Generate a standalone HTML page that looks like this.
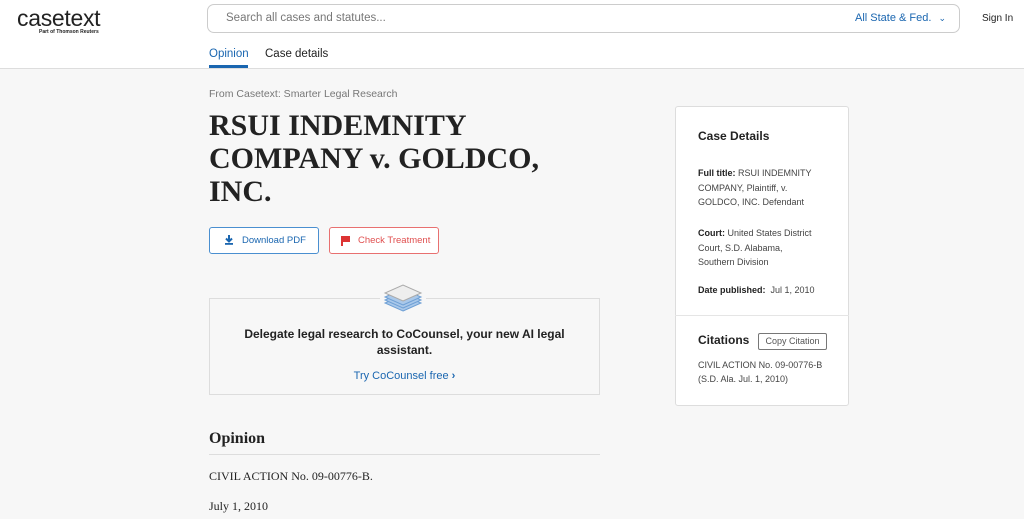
<!DOCTYPE html>
<html><head><style>
*{margin:0;padding:0;box-sizing:border-box}
body{width:1024px;height:519px;overflow:hidden;background:#f7f7f7;font-family:"Liberation Sans",sans-serif;color:#222;position:relative}
.hdr{position:absolute;left:0;top:0;width:1024px;height:69px;background:#fff;border-bottom:1px solid #ddd}
.abs{position:absolute}
.serif{font-family:"Liberation Serif",serif}
</style></head><body>
<div class="hdr">
 <div class="abs" style="left:17px;top:5px;font-size:23px;color:#222;letter-spacing:-0.3px">casetext</div>
 <div class="abs" style="left:39px;top:29px;font-size:5px;font-weight:bold">Part of Thomson Reuters</div>
 <div class="abs" style="left:207px;top:4px;width:753px;height:29px;border:1px solid #ccc;border-radius:7px"></div>
 <div class="abs" style="left:226px;top:12px;font-size:11.5px;color:#777">Search all cases and statutes...</div>
 <div class="abs" style="left:855px;top:12px;font-size:11px;color:#1a66b0">All State &amp; Fed. <span style="margin-left:4px;font-size:9px">&#8964;</span></div>
 <div class="abs" style="left:982px;top:13px;font-size:10px;color:#222">Sign In</div>
 <div class="abs" style="left:209px;top:48px;font-size:11.5px;color:#1a66b0">Opinion</div>
 <div class="abs" style="left:209px;top:65px;width:39px;height:3px;background:#1a66b0"></div>
 <div class="abs" style="left:265px;top:48px;font-size:11.5px;color:#222">Case details</div>
</div>
<div class="abs" style="left:209px;top:88px;font-size:10.5px;color:#777">From Casetext: Smarter Legal Research</div>
<div class="abs serif" style="left:209px;top:109px;font-size:30px;line-height:33px;font-weight:bold;width:345px;color:#222">RSUI INDEMNITY COMPANY v. GOLDCO, INC.</div>
<div class="abs" style="left:209px;top:227px;width:110px;height:27px;border:1px solid #4a8fd0;border-radius:3px;background:#fff;font-size:9.5px;color:#1a66b0;padding:7px 0 0 32px">Download PDF</div>
<svg class="abs" style="left:224px;top:234px" width="10" height="12"><path d="M5 1 V7 M2 4.5 L5 7.5 L8 4.5" stroke="#1a66b0" stroke-width="2" fill="none"/><rect x="1" y="9" width="8" height="1.8" fill="#1a66b0"/></svg>
<div class="abs" style="left:329px;top:227px;width:110px;height:27px;border:1px solid #e87070;border-radius:3px;background:#fff;font-size:9.5px;color:#e05050;padding:7px 0 0 28px">Check Treatment</div>
<div class="abs" style="left:341px;top:236px;width:9px;height:6px;background:#d33"></div>
<div class="abs" style="left:341px;top:236px;width:1.5px;height:10px;background:#d33"></div>
<div class="abs" style="left:209px;top:298px;width:391px;height:97px;border:1px solid #ddd"></div>
<svg class="abs" style="left:380px;top:283px" width="46" height="32"><rect x="0" y="0" width="46" height="32" fill="#f7f7f7"/><g fill="#a9c8ea" stroke="#6fa0d5"><path d="M23 20 L41 12 L23 4 L5 12Z" transform="translate(0,8)"/><path d="M23 20 L41 12 L23 4 L5 12Z" transform="translate(0,5)"/><path d="M23 20 L41 12 L23 4 L5 12Z" transform="translate(0,2)"/></g><path d="M23 18 L41 10 L23 2 L5 10Z" fill="#eee" stroke="#aaa"/></svg>
<div class="abs" style="left:209px;top:326px;width:391px;text-align:center;font-size:12px;font-weight:bold;line-height:16px;padding:0 35px">Delegate legal research to CoCounsel, your new AI legal assistant.</div>
<div class="abs" style="left:209px;top:370px;width:391px;text-align:center;font-size:11px;color:#1a66b0">Try CoCounsel free <b>›</b></div>
<div class="abs serif" style="left:209px;top:430px;font-size:16px;font-weight:bold">Opinion</div>
<div class="abs" style="left:209px;top:454px;width:391px;height:1px;background:#ddd"></div>
<div class="abs serif" style="left:209px;top:469px;font-size:12px">CIVIL ACTION No. 09-00776-B.</div>
<div class="abs serif" style="left:209px;top:499px;font-size:12px">July 1, 2010</div>
<div class="abs" style="left:675px;top:106px;width:174px;height:300px;background:#fff;border:1px solid #ddd;border-radius:3px"></div>
<div class="abs" style="left:675px;top:315px;width:174px;height:1px;background:#e5e5e5"></div>
<div class="abs" style="left:698px;top:129px;font-size:12px;font-weight:bold">Case Details</div>
<div class="abs" style="left:698px;top:166px;width:128px;font-size:9px;line-height:14.5px;color:#444"><b style="color:#222">Full title:</b> RSUI INDEMNITY COMPANY, Plaintiff, v. GOLDCO, INC. Defendant</div>
<div class="abs" style="left:698px;top:226px;width:116px;font-size:9px;line-height:14.5px;color:#444"><b style="color:#222">Court:</b> United States District Court, S.D. Alabama, Southern Division</div>
<div class="abs" style="left:698px;top:285px;font-size:9px;color:#444"><b style="color:#222">Date published:</b>&nbsp; Jul 1, 2010</div>
<div class="abs" style="left:698px;top:333px;font-size:12px;font-weight:bold">Citations</div>
<div class="abs" style="left:758px;top:333px;width:69px;height:17px;border:1px solid #777;border-radius:2px;font-size:9px;color:#555;text-align:center;line-height:15px">Copy Citation</div>
<div class="abs" style="left:698px;top:358px;width:132px;font-size:9px;line-height:14px;color:#444">CIVIL ACTION No. 09-00776-B (S.D. Ala. Jul. 1, 2010)</div>
</body></html>
